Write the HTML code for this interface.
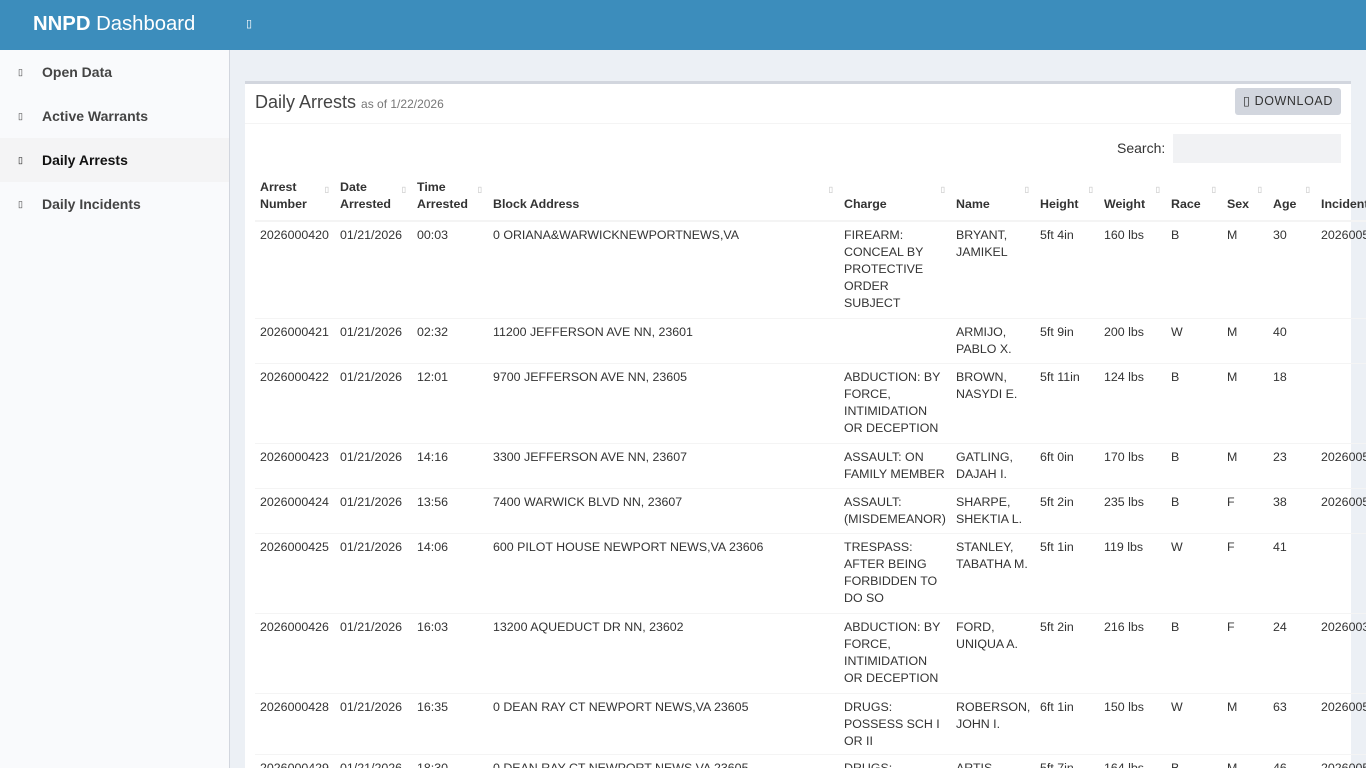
<!DOCTYPE html>
<html><head><meta charset="utf-8"><style>
*{box-sizing:border-box;margin:0;padding:0}
html,body{width:1366px;height:768px;overflow:hidden}
body{background:#ecf0f5;font-family:"Liberation Sans",Arial,sans-serif;color:#333;position:relative}
.top{position:absolute;left:0;top:0;width:1366px;height:50px;background:#3c8dbc;color:#fff}
.logo{position:absolute;left:33px;top:13px;font-size:20.3px}
.tog{position:absolute;left:246px;top:17px;font-size:11px}
.side{position:absolute;left:0;top:50px;width:230px;height:718px;background:#f9fafc;border-right:1px solid #d2d6de}
.side div{height:44px;line-height:44px;padding-left:42px;font-size:14px;font-weight:bold;color:#444;position:relative}
.side div:before{content:"\25AF";position:absolute;left:18px;font-size:9px;font-weight:normal}
.side .act{background:#f4f4f5;color:#111}
.card{position:absolute;left:245px;top:81px;width:1106px;height:687px;background:#fff;border-top:3px solid #d2d6de}
.ttl{position:absolute;left:10px;top:8px;font-size:18px;color:#444}
.ttl small{font-size:12px;color:#777}
.hl{position:absolute;left:0;top:39px;width:100%;border-top:1px solid #f4f4f4}
.btn{position:absolute;left:990px;top:4px;width:106px;height:27px;background:#d2d6de;border-radius:3px;font-size:12.5px;letter-spacing:.6px;line-height:27px;text-align:center;color:#333}
.srch{position:absolute;left:872px;top:56px;font-size:14px}
.inp{position:absolute;left:928px;top:50px;width:168px;height:29px;background:#f1f2f4}
.clip{position:absolute;left:255px;top:176px;width:1111px;height:592px;overflow:hidden}
table{width:1141px;border-collapse:collapse;table-layout:fixed;font-size:12.4px;line-height:17px}
th{text-align:left;vertical-align:bottom;padding:3px 5px 7px;font-weight:bold;position:relative;border-bottom:2px solid #f4f4f4}
th:after{content:"\25AF";position:absolute;right:6px;top:5px;font-size:8px;color:#bbb;font-weight:normal}
td{vertical-align:top;padding:5px 5px 4px;border-top:1px solid #f4f4f4;color:#333;overflow:hidden;white-space:normal}
</style></head><body>
<div class="top"><div class="logo"><b>NNPD</b> Dashboard</div><div class="tog">&#9647;</div></div>
<div class="side"><div>Open Data</div><div>Active Warrants</div><div class="act">Daily Arrests</div><div>Daily Incidents</div></div>
<div class="card"><div class="ttl">Daily Arrests <small>as of 1/22/2026</small></div><div class="hl"></div>
<div class="btn">&#9647; DOWNLOAD</div><div class="srch">Search:</div><div class="inp"></div></div>
<div class="clip"><table>
<colgroup><col style="width:80px"><col style="width:77px"><col style="width:76px"><col style="width:351px"><col style="width:112px"><col style="width:84px"><col style="width:64px"><col style="width:67px"><col style="width:56px"><col style="width:46px"><col style="width:48px"><col style="width:80px"></colgroup>
<tr style="height:45px"><th>Arrest Number</th><th>Date Arrested</th><th>Time Arrested</th><th>Block Address</th><th>Charge</th><th>Name</th><th>Height</th><th>Weight</th><th>Race</th><th>Sex</th><th>Age</th><th>Incident</th></tr>
<tr style="height:97px"><td>2026000420</td><td>01/21/2026</td><td>00:03</td><td>0 ORIANA&amp;WARWICKNEWPORTNEWS,VA</td><td>FIREARM: CONCEAL BY PROTECTIVE ORDER SUBJECT</td><td>BRYANT, JAMIKEL</td><td>5ft 4in</td><td>160 lbs</td><td>B</td><td>M</td><td>30</td><td>2026005</td></tr>
<tr style="height:45px"><td>2026000421</td><td>01/21/2026</td><td>02:32</td><td>11200 JEFFERSON AVE NN, 23601</td><td></td><td>ARMIJO, PABLO X.</td><td>5ft 9in</td><td>200 lbs</td><td>W</td><td>M</td><td>40</td><td></td></tr>
<tr style="height:80px"><td>2026000422</td><td>01/21/2026</td><td>12:01</td><td>9700 JEFFERSON AVE NN, 23605</td><td>ABDUCTION: BY FORCE, INTIMIDATION OR DECEPTION</td><td>BROWN, NASYDI E.</td><td>5ft 11in</td><td>124 lbs</td><td>B</td><td>M</td><td>18</td><td></td></tr>
<tr style="height:45px"><td>2026000423</td><td>01/21/2026</td><td>14:16</td><td>3300 JEFFERSON AVE NN, 23607</td><td>ASSAULT: ON FAMILY MEMBER</td><td>GATLING, DAJAH I.</td><td>6ft 0in</td><td>170 lbs</td><td>B</td><td>M</td><td>23</td><td>2026005</td></tr>
<tr style="height:45px"><td>2026000424</td><td>01/21/2026</td><td>13:56</td><td>7400 WARWICK BLVD NN, 23607</td><td>ASSAULT: (MISDEMEANOR)</td><td>SHARPE, SHEKTIA L.</td><td>5ft 2in</td><td>235 lbs</td><td>B</td><td>F</td><td>38</td><td>2026005</td></tr>
<tr style="height:80px"><td>2026000425</td><td>01/21/2026</td><td>14:06</td><td>600 PILOT HOUSE NEWPORT NEWS,VA 23606</td><td>TRESPASS: AFTER BEING FORBIDDEN TO DO SO</td><td>STANLEY, TABATHA M.</td><td>5ft 1in</td><td>119 lbs</td><td>W</td><td>F</td><td>41</td><td></td></tr>
<tr style="height:80px"><td>2026000426</td><td>01/21/2026</td><td>16:03</td><td>13200 AQUEDUCT DR NN, 23602</td><td>ABDUCTION: BY FORCE, INTIMIDATION OR DECEPTION</td><td>FORD, UNIQUA A.</td><td>5ft 2in</td><td>216 lbs</td><td>B</td><td>F</td><td>24</td><td>2026003</td></tr>
<tr style="height:60px"><td>2026000428</td><td>01/21/2026</td><td>16:35</td><td>0 DEAN RAY CT NEWPORT NEWS,VA 23605</td><td>DRUGS: POSSESS SCH I OR II</td><td>ROBERSON, JOHN I.</td><td>6ft 1in</td><td>150 lbs</td><td>W</td><td>M</td><td>63</td><td>2026005</td></tr>
<tr style="height:60px"><td>2026000429</td><td>01/21/2026</td><td>18:30</td><td>0 DEAN RAY CT NEWPORT NEWS,VA 23605</td><td>DRUGS:</td><td>ARTIS,</td><td>5ft 7in</td><td>164 lbs</td><td>B</td><td>M</td><td>46</td><td>2026005</td></tr>
</table></div>
</body></html>
